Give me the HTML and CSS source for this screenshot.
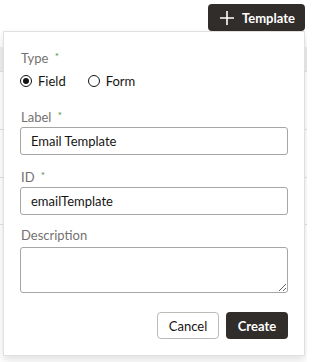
FILE: index.html
```html
<!DOCTYPE html>
<html>
<head>
<meta charset="utf-8">
<link rel="stylesheet" href="styles.css">
</head>
<body>
<div class="page">
  <div class="toolbar">
    <button class="btn-template">
      <svg class="plus" width="16" height="16" viewBox="0 0 16 16"><path d="M8 1v14M1 8h14" stroke="#fff" stroke-width="1.6" fill="none"/></svg>
      <span>Template</span>
    </button>
  </div>
  <div class="bg-table">
    <div class="bg-head"></div>
    <div class="bg-row r1"></div>
    <div class="bg-row r2"></div>
    <div class="bg-row r3"></div>
  </div>
  <div class="popup">
    <div class="label">Type <span class="req">*</span></div>
    <div class="radios">
      <label class="radio"><span class="circle checked"></span>Field</label>
      <label class="radio"><span class="circle"></span>Form</label>
    </div>
    <div class="label l-label">Label <span class="req">*</span></div>
    <div class="input">Email Template</div>
    <div class="label l-id">ID <span class="req">*</span></div>
    <div class="input">emailTemplate</div>
    <div class="label l-desc">Description</div>
    <textarea class="textarea"></textarea>
    <div class="actions">
      <button class="btn btn-cancel">Cancel</button>
      <button class="btn btn-create">Create</button>
    </div>
  </div>
</div>
</body>
</html>
```
FILE: styles.css
```css
* { box-sizing: border-box; }
html, body { margin: 0; padding: 0; background: #fff; }
body { font-family: "Lato", "Open Sans", sans-serif; color: #161513; }
.page { position: relative; width: 307px; height: 362px; overflow: hidden; }
.toolbar { display: flex; justify-content: flex-end; padding: 4px 2px 0 0; height: 31px; }
.btn-template {
  display: flex; align-items: center; gap: 7px;
  height: 27px; width: 97px; padding: 0 0 0 11px;
  background: #312d2a; color: #fff; border: none; border-radius: 4px;
  font-family: inherit; font-size: 13px; font-weight: 700;
}
.plus { flex: none; }
.bg-table { display: flex; flex-direction: column; }
.bg-head { height: 25px; margin-top: 16px; background: #f1efed; border-bottom: 1px solid #e4e1dd; }
.bg-row { border-bottom: 1px solid #e4e1dd; }
.r1 { height: 58px; }
.r2 { height: 48px; }
.r3 { height: 47px; }
.popup {
  position: absolute; left: 3px; top: 31px; width: 302px; height: 325px;
  background: #fff; border: 1px solid #e2e0de;
  box-shadow: 0 4px 8px rgba(0,0,0,0.12);
  padding: 16px 16px 0 16px;
  display: flex; flex-direction: column;
}
.label { font-size: 13px; line-height: 16px; color: #757170; height: 16px; padding-left: 1px; }
.req { color: #4f8a3c; font-size: 10px; vertical-align: 3px; margin-left: 3px; }
.radios { display: flex; align-items: center; gap: 22px; height: 16px; margin-top: 9px; font-size: 13px; }
.radio { display: flex; align-items: center; gap: 6px; color: #161513; }
.circle { width: 12px; height: 12px; border: 1px solid #161513; border-radius: 50%; display: flex; align-items: center; justify-content: center; }
.circle.checked::after { content: ""; width: 6px; height: 6px; border-radius: 50%; background: #161513; }
.l-label { margin-top: 18px; }
.l-id { margin-top: 12px; }
.l-desc { margin-top: 12px; }
.input {
  margin-top: 4px; height: 28px; width: 268px;
  border: 1px solid #a9a5a2; border-radius: 3px;
  padding: 0 10px; font-size: 13px; line-height: 26px; color: #161513;
}
.textarea {
  margin-top: 4px; height: 46px; width: 268px;
  border: 1px solid #a9a5a2; border-radius: 3px; display: block;
  font-family: inherit; font-size: 13px;
}
.actions { display: flex; justify-content: flex-end; gap: 7px; margin-top: 19px; }
.btn {
  height: 27px; border-radius: 4px; font-family: inherit; font-size: 13px; padding: 0;
}
.btn-cancel { width: 62px; background: #fff; border: 1px solid #bdb9b5; color: #161513; }
.btn-create { width: 62px; background: #312d2a; border: none; color: #fff; font-weight: 700; }
```
